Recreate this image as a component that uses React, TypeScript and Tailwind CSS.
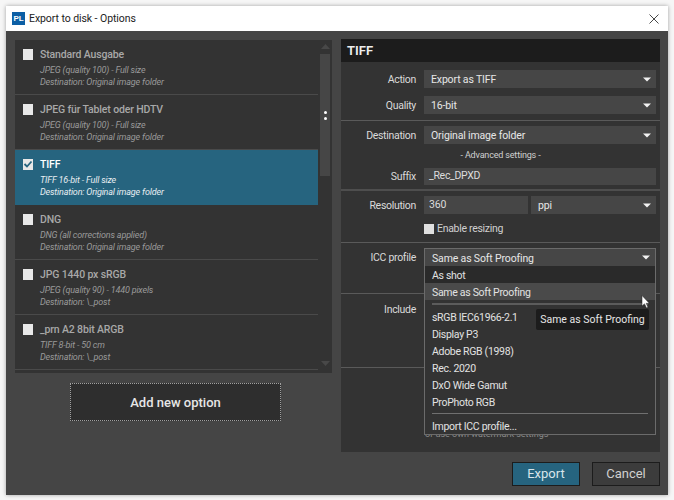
import React from "react";

const font = { fontFamily: 'Roboto, "Noto Sans", sans-serif' };

function Caret() {
  return (
    <svg width="8" height="5" viewBox="0 0 8 5" className="shrink-0">
      <path d="M0 0.5 H8 L4 4.5 Z" fill="#f2f2f2" />
    </svg>
  );
}

function Check({ checked }: { checked?: boolean }) {
  return (
    <span className="w-[10px] h-[11px] bg-[#e8e8e8] flex items-center justify-center shrink-0">
      {checked && (
        <svg width="10" height="10" viewBox="0 0 10 10">
          <path d="M1.5 5 L4 7.5 L8.5 2.5" stroke="#26647f" strokeWidth="1.8" fill="none" />
        </svg>
      )}
    </span>
  );
}

const items = [
  { t: "Standard Ausgabe", a: "JPEG (quality 100) - Full size", b: "Destination: Original image folder" },
  { t: "JPEG für Tablet oder HDTV", a: "JPEG (quality 100) - Full size", b: "Destination: Original image folder" },
  { t: "TIFF", a: "TIFF 16-bit - Full size", b: "Destination: Original image folder", sel: true },
  { t: "DNG", a: "DNG (all corrections applied)", b: "Destination: Original image folder" },
  { t: "JPG 1440 px sRGB", a: "JPEG (quality 90) - 1440 pixels", b: "Destination: \\_post" },
  { t: "_prn A2 8bit ARGB", a: "TIFF 8-bit - 50 cm", b: "Destination: \\_post" },
];

function Row({ label, children }: { label: string; children: React.ReactNode }) {
  return (
    <div className="flex items-center h-[18px]">
      <div className="w-[83px] pr-[8px] pt-[2px] text-right text-[10.5px] tracking-[-0.3px] leading-[18px] text-[#dadada] shrink-0">{label}</div>
      <div className="flex-1 flex gap-[3px] min-w-0">{children}</div>
    </div>
  );
}

function Select({ v, cls }: { v: string; cls?: string }) {
  return (
    <div className={"h-[18px] bg-[#464646] flex items-center justify-between pl-[7px] pr-[5px] text-[10.5px] tracking-[-0.15px] leading-[16px] text-[#e6e6e6] " + (cls ?? "flex-1")}>
      <span className="pt-[2px]">{v}</span>
      <Caret />
    </div>
  );
}

export default function App() {
  return (
    <div style={font} className="w-[674px] h-[500px] bg-[#f6f6f6] p-[6px] overflow-hidden">
      <div className="w-[662px] h-[489px] flex flex-col shadow-[0_0_4px_rgba(0,0,0,0.35)]">
        <div className="h-[25px] bg-white flex items-center pl-[6px] pr-[9px] shrink-0">
          <span className="w-[13px] h-[13px] bg-[#0c5fa5] text-white text-[8px] font-bold leading-[13px] text-center" style={{ fontFamily: '"Liberation Sans", sans-serif' }}>PL</span>
          <span className="ml-[4px] text-[10.5px] tracking-[-0.07px] text-[#222]">Export to disk - Options</span>
          <svg width="10" height="10" viewBox="0 0 10 10" className="ml-auto">
            <path d="M0.5 0.5 L9.5 9.5 M9.5 0.5 L0.5 9.5" stroke="#333" strokeWidth="0.9" />
          </svg>
        </div>
        <div className="h-[421px] bg-[#454545] pl-[9px] pr-[8px] pt-[8px] flex gap-[9px] shrink-0">
          <div className="w-[317px] shrink-0 flex flex-col">
            <div className="h-[333px] mt-[1px] flex bg-[#333333] overflow-hidden shrink-0">
              <div className="w-[303px] shrink-0 flex flex-col">
                {items.map((it) => (
                  <div key={it.t} className={"h-[55px] shrink-0 pl-[8px] pt-[8px] border-b " + (it.sel ? "bg-[#26647f] border-[#26647f]" : "border-[#4a4a4a]")}>
                    <div className="flex items-center gap-[7px] h-[12px]">
                      <Check checked={it.sel} />
                      <span className={"text-[10.5px] tracking-[-0.15px] font-medium leading-[12px] pt-[2px] " + (it.sel ? "text-white" : "text-[#a8a8a8]")}>{it.t}</span>
                    </div>
                    <div className={"pl-[17px] mt-[4px] text-[9px] tracking-[-0.17px] italic leading-[12px] " + (it.sel ? "text-[#e8eef2]" : "text-[#9a9a9a]")}>
                      <div>{it.a}</div>
                      <div>{it.b}</div>
                    </div>
                  </div>
                ))}
              </div>
              <div className="w-[14px] flex flex-col items-center relative">
                <svg width="9" height="5" viewBox="0 0 9 5" className="mt-[4px] shrink-0"><path d="M0 5 H9 L4.5 0 Z" fill="#484848" /></svg>
                <div className="w-[10px] h-[122px] bg-[#464646] mt-[5px] shrink-0" />
                <span className="absolute top-[71px] left-[6px] w-[3px] h-[3px] rounded-full bg-white" />
                <span className="absolute top-[77px] left-[6px] w-[3px] h-[3px] rounded-full bg-white" />
                <svg width="9" height="5" viewBox="0 0 9 5" className="mt-auto mb-[7px] shrink-0"><path d="M0 0 H9 L4.5 5 Z" fill="#484848" /></svg>
              </div>
            </div>
            <div className="self-start ml-[55px] mt-[10px] w-[211px] h-[38px] pt-[2px] bg-[#2e2e2e] border border-dotted border-[#a0a0a0] flex items-center justify-center text-[13px] font-medium text-[#e6e6e6]">
              Add new option
            </div>
          </div>

          <div className="w-[319px] h-[413px] bg-[#333333] flex flex-col relative">
            <div className="h-[23px] bg-[#1c1c1c] flex items-center pl-[6px] text-[13px] font-semibold text-[#eeeeee] shrink-0">TIFF</div>
            <div className="flex flex-col pt-[8px]">
              <div className="h-[51px] flex flex-col gap-[8px] border-b border-[#5a5a5a] pr-[4px] shrink-0">
                <Row label="Action"><Select v="Export as TIFF" /></Row>
                <Row label="Quality"><Select v="16-bit" /></Row>
              </div>
              <div className="h-[70px] flex flex-col pt-[5px] border-b-2 border-[#4e4e4e] pr-[4px] shrink-0">
                <Row label="Destination"><Select v="Original image folder" /></Row>
                <div className="h-[23px] -mr-[4px] flex items-center justify-center text-[9px] tracking-[-0.17px] text-[#d0d0d0]">- Advanced settings -</div>
                <Row label="Suffix">
                  <div className="flex-1 h-[17px] bg-[#464646] pl-[5px] flex items-center text-[10.5px] tracking-[-0.3px] text-[#dcdcdc]">_Rec_DPXD</div>
                </Row>
              </div>
              <div className="h-[52px] flex flex-col pt-[5px] border-b border-[#5a5a5a] pr-[4px] shrink-0">
                <Row label="Resolution">
                  <div className="w-[104px] h-[18px] bg-[#464646] pl-[5px] flex items-center text-[10.5px] tracking-[-0.15px] text-[#dcdcdc]">360</div>
                  <Select v="ppi" />
                </Row>
                <div className="h-[28px] pl-[83px] pt-[2px] flex items-center gap-[3px] text-[10.5px] tracking-[-0.3px] text-[#d0d0d0]">
                  <span className="w-[10px] h-[10px] bg-[#e0e0e0]" />
                  Enable resizing
                </div>
              </div>
              <div className="h-[51px] flex flex-col pt-[5px] border-b border-[#5a5a5a] pr-[4px] shrink-0">
                <Row label="ICC profile"><Select v="Same as Soft Proofing" cls="flex-1 border border-[#6b6b6b] border-b-0" /></Row>
              </div>
              <div className="h-[74px] pt-[6px] border-b border-[#5a5a5a] pr-[4px] shrink-0">
                <Row label="Include"><span /></Row>
              </div>
            </div>

            <div className="absolute left-[84px] top-[388px] text-[9px] leading-[14px] text-[#8a8a8a] whitespace-nowrap">or use own watermark settings</div>

            <div className="absolute left-[83px] top-[227px] w-[232px] h-[169px] bg-[#333333] border border-[#6b6b6b] border-t-0 text-[10.5px] tracking-[-0.3px] text-[#e2e2e2] flex flex-col">
              <div className="h-[17px] bg-[#2a2a2a] pl-[7px] pt-[2px] flex items-center shrink-0">As shot</div>
              <div className="h-[17px] bg-[#4a4a4a] pl-[7px] pt-[2px] flex items-center shrink-0">Same as Soft Proofing</div>
              <div className="mx-[7px] mt-[3px] mb-[3px] h-[2px] bg-[#5c5c5c] shrink-0" />
              {["sRGB IEC61966-2.1", "Display P3", "Adobe RGB (1998)", "Rec. 2020", "DxO Wide Gamut", "ProPhoto RGB"].map((s) => (
                <div key={s} className="h-[17px] pl-[7px] pt-[2px] flex items-center shrink-0">{s}</div>
              ))}
              <div className="mx-[7px] mt-[3px] mb-[3px] h-[1px] bg-[#707070] shrink-0" />
              <div className="h-[17px] pl-[7px] pt-[2px] flex items-center shrink-0">Import ICC profile...</div>
            </div>

            <div className="absolute left-[195px] top-[270px] w-[113px] h-[21px] bg-[#1c1c1c] rounded-[2px] flex items-center justify-center whitespace-nowrap text-[10.5px] text-[#e6e6e6]">Same as Soft Proofing</div>
            <svg width="9" height="14" viewBox="0 0 9 14" className="absolute left-[300px] top-[256px]">
              <path d="M1 0.5 V11 L3.5 8.8 L5.5 13 L7 12.3 L5.2 8.3 H8.3 Z" fill="#ffffff" stroke="#222" strokeWidth="0.5" />
            </svg>
          </div>
        </div>
        <div className="h-[43px] bg-[#454545] flex items-start justify-end gap-[12px] pr-[8px] pt-[10px] shrink-0">
          <div className="w-[68px] h-[24px] bg-[#26647f] border border-[#1c1c1c] flex items-center justify-center text-[13px] text-[#d8e4ea]">Export</div>
          <div className="w-[68px] h-[24px] bg-[#3c3c3c] border border-[#1c1c1c] flex items-center justify-center text-[13px] text-[#d0d0d0]">Cancel</div>
        </div>
      </div>
    </div>
  );
}
